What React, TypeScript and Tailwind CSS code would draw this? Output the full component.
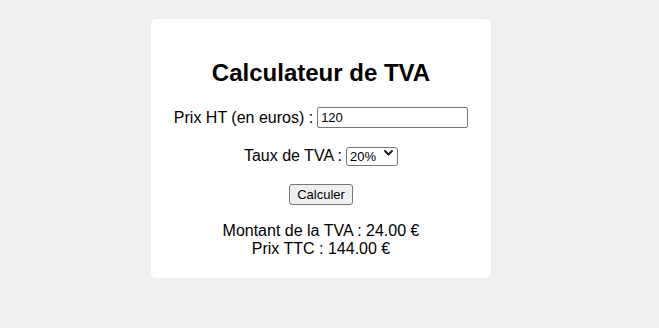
import { useState } from "react";

// ─── Constants ────────────────────────────────────────────────────────────────

const RATES = ["5.5", "10", "20"];

export default function App() {
  const [prixHT, setPrixHT] = useState("120");
  const [taux, setTaux] = useState("20");
  const [result, setResult] = useState({ tva: 24, ttc: 144 });

  const calculer = () => {
    const ht = parseFloat(prixHT) || 0;
    const tva = (ht * parseFloat(taux)) / 100;
    setResult({ tva, ttc: ht + tva });
  };

  return (
    <div className="min-h-screen bg-[#f0f0f0] pt-[19px] pr-[17px] font-['Liberation_Sans',Arial,sans-serif] text-black">
      {/* ── Card ── */}
      <div className="mx-auto w-[340px] rounded-[5px] bg-white px-5 pt-5 pb-5 text-center">
        <h2 className="mt-5 mb-[21px] text-2xl leading-[27px] font-bold">Calculateur de TVA</h2>

        {/* Prix HT */}
        <div className="mb-[17px] flex h-[21px] items-center justify-center gap-1 text-base">
          <label htmlFor="prixHT">Prix HT (en euros) :</label>
          <input
            id="prixHT"
            type="text"
            value={prixHT}
            onChange={(e) => setPrixHT(e.target.value)}
            className="h-[21px] w-[151px] rounded-[2px] border border-[#767676] px-[3px] text-[13px] outline-none"
          />
        </div>

        {/* Taux */}
        <div className="mb-[17px] flex h-[21px] items-center justify-center gap-1 text-base">
          <label htmlFor="taux">Taux de TVA :</label>
          <div className="relative">
            <select
              id="taux"
              value={taux}
              onChange={(e) => setTaux(e.target.value)}
              className="h-[19px] w-[52px] appearance-none rounded-[3px] border border-[#767676] bg-white pl-[3px] text-left text-[13px] leading-[17px] outline-none"
            >
              {RATES.map((r) => (
                <option key={r} value={r}>{r}%</option>
              ))}
            </select>
            <svg
              className="pointer-events-none absolute top-[6px] right-[5px]"
              width="9"
              height="6"
              viewBox="0 0 9 6"
              fill="none"
            >
              <path d="M1 1l3.5 3.5L8 1" stroke="#111" strokeWidth="1.8" strokeLinecap="round" strokeLinejoin="round" />
            </svg>
          </div>
        </div>

        {/* Bouton */}
        <div className="flex h-[22px] items-center justify-center">
          <button
            onClick={calculer}
            className="h-[21px] w-[64px] rounded-[3px] border border-[#767676] bg-[#efefef] text-[13px] leading-none"
          >
            Calculer
          </button>
        </div>

        {/* Résultat */}
        <div className="mt-[17px] text-base leading-[18px]">
          <div>Montant de la TVA : {result.tva.toFixed(2)} €</div>
          <div>Prix TTC : {result.ttc.toFixed(2)} €</div>
        </div>
      </div>
    </div>
  );
}
